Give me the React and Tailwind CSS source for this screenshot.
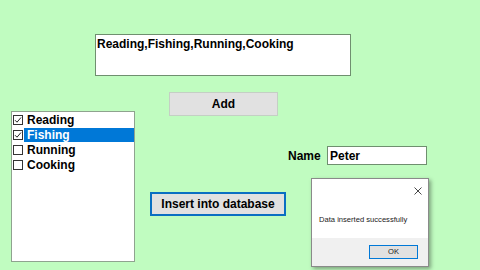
import React from "react";

const items = [
  { label: "Reading", checked: true, selected: false },
  { label: "Fishing", checked: true, selected: true },
  { label: "Running", checked: false, selected: false },
  { label: "Cooking", checked: false, selected: false },
];

const Check = ({ checked }) => (
  <span className="w-[10px] h-[10px] border border-[#333333] bg-white flex items-center justify-center shrink-0">
    {checked && (
      <svg width="8" height="8" viewBox="0 0 8 8">
        <path d="M1 4.2 L3 6.2 L7 1.5" fill="none" stroke="#222" strokeWidth="1" />
      </svg>
    )}
  </span>
);

export default function App() {
  return (
    <div
      className="relative w-[480px] h-[270px] overflow-hidden bg-[#c0fcc0] flex flex-col text-[12px] font-bold text-black"
      style={{ fontFamily: '"Liberation Sans", Arial, sans-serif' }}
    >
      {/* hobbies text */}
      <div className="ml-[95px] mt-[34px] w-[256px] h-[42px] bg-white border border-[#6f8f6f] px-[1px] leading-[16px] pt-[1px]">
        Reading,Fishing,Running,Cooking
      </div>

      {/* Add */}
      <div className="ml-[169px] mt-[16px] w-[109px] h-[24px] bg-[#e1e1e1] border border-[#c4cfc4] flex items-center justify-center">
        Add
      </div>

      <div className="flex -mt-[5px]">
        {/* checked list */}
        <div className="ml-[11px] w-[124px] h-[151px] bg-white border border-[#8fa38f] flex flex-col shrink-0">
          {items.map((it) => (
            <div key={it.label} className="h-[15px] flex items-center">
              <span className="ml-[1px]">
                <Check checked={it.checked} />
              </span>
              <span
                className={`ml-[1px] h-[14px] flex-1 flex items-center pl-[3px] ${
                  it.selected ? "bg-[#0078d7] text-white" : ""
                }`}
              >
                {it.label}
              </span>
            </div>
          ))}
        </div>

        <div className="flex flex-col">
          <div className="flex items-center mt-[35px]">
            <span className="ml-[153px] w-[39px]">Name</span>
            <div className="w-[100px] h-[19px] bg-white border border-[#6f8f6f] flex items-center pl-[2px]">
              Peter
            </div>
          </div>
          <div className="ml-[15px] mt-[27px] w-[136px] h-[24px] bg-[#e1e1e1] border-2 border-[#0a6fc2] flex items-center justify-center">
            Insert into database
          </div>
        </div>
      </div>

      {/* message box */}
      <div className="absolute left-[311px] top-[178px] w-[118px] h-[89px] bg-white border border-[#8a8a8a] shadow-[2px_2px_4px_rgba(0,0,0,0.35)] flex flex-col font-normal">
        <div className="h-[24px] flex justify-end items-center pr-[6px]">
          <svg width="8" height="8" viewBox="0 0 8 8">
            <path d="M0.5 0.5 L7.5 7.5 M7.5 0.5 L0.5 7.5" stroke="#333" strokeWidth="0.9" />
          </svg>
        </div>
        <div className="flex-1 pl-[7px] pt-[11px] text-[7.6px] text-[#222]">
          Data inserted successfully
        </div>
        <div className="h-[28px] bg-[#f0f0f0] flex items-center justify-end pr-[10px]">
          <div className="w-[49px] h-[14px] bg-[#e1e1e1] border border-[#0078d7] flex items-center justify-center text-[7.6px] text-[#222]">
            OK
          </div>
        </div>
      </div>
    </div>
  );
}
